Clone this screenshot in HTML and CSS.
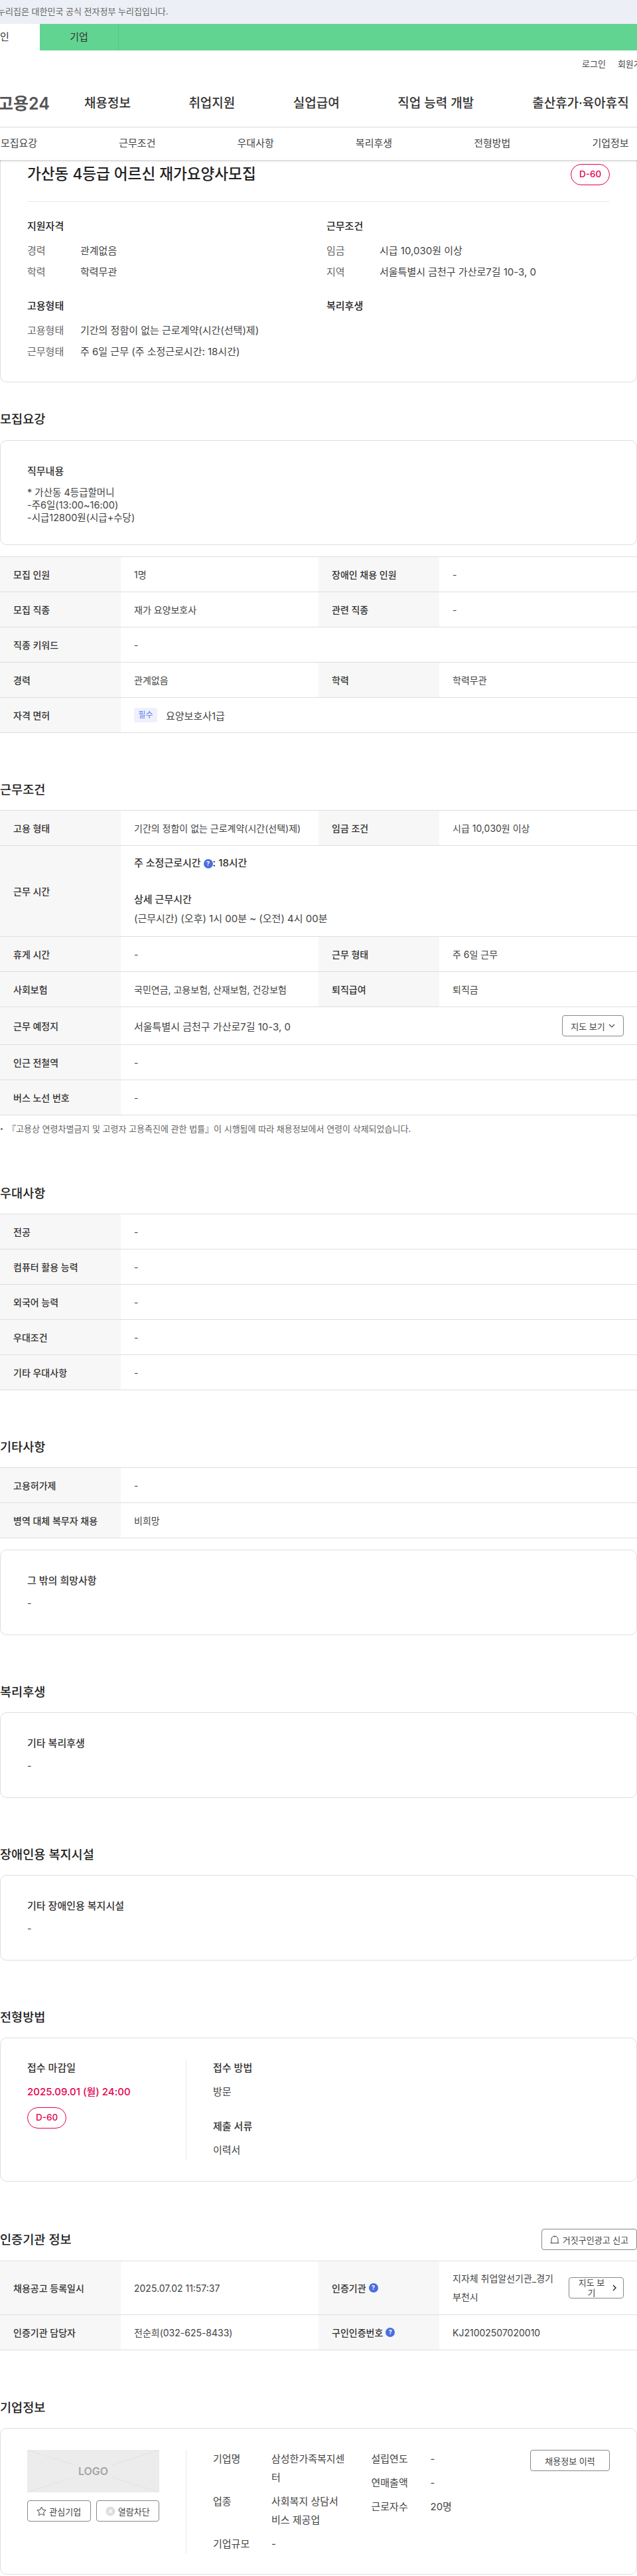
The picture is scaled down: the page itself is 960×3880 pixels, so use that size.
FILE: index.html
```html
<!DOCTYPE html>
<html lang="ko">
<head>
	<meta charset="UTF-8">
	<title>가산동 4등급 어르신 재가요양사모집 | 고용24</title>
	<link rel="stylesheet" href="styles.css">
</head>
<body>

	<!-- top banner -->
	<div class="gov-bar"><span>누리집은 대한민국 공식 전자정부 누리집입니다.</span></div>

	<div class="user-tabs">
		<div class="user-tab active"><span>인</span></div>
		<div class="user-tab">기업</div>
	</div>

	<div class="util-links">
		<a>로그인</a>
		<a>회원가입</a>
	</div>

	<header class="main-nav">
		<div class="logo">고용24</div>
		<a class="nav-1">채용정보</a>
		<a class="nav-2">취업지원</a>
		<a class="nav-3">실업급여</a>
		<a class="nav-4">직업 능력 개발</a>
		<a class="nav-5">출산휴가·육아휴직</a>
	</header>

	<nav class="anchor-tabs">
		<a>모집요강</a>
		<a>근무조건</a>
		<a>우대사항</a>
		<a>복리후생</a>
		<a>전형방법</a>
		<a>기업정보</a>
	</nav>

	<div class="content">

		<!-- summary card -->
		<section class="card summary">
			<div class="summary-head">
				<h1>가산동 4등급 어르신 재가요양사모집</h1>
				<span class="dday">D-60</span>
			</div>
			<div class="summary-grid">
				<div class="sum-block">
					<h3>지원자격</h3>
					<dl><dt>경력</dt><dd>관계없음</dd></dl>
					<dl><dt>학력</dt><dd>학력무관</dd></dl>
				</div>
				<div class="sum-block">
					<h3>근무조건</h3>
					<dl><dt>임금</dt><dd>시급 10,030원 이상</dd></dl>
					<dl><dt>지역</dt><dd>서울특별시 금천구 가산로7길 10-3, 0</dd></dl>
				</div>
				<div class="sum-block">
					<h3>고용형태</h3>
					<dl><dt>고용형태</dt><dd>기간의 정함이 없는 근로계약(시간(선택)제)</dd></dl>
					<dl><dt>근무형태</dt><dd>주 6일 근무 (주 소정근로시간: 18시간)</dd></dl>
				</div>
				<div class="sum-block">
					<h3>복리후생</h3>
				</div>
			</div>
		</section>

		<!-- 모집요강 -->
		<h2 class="sec-title first">모집요강</h2>
		<section class="card text-card job-desc">
			<h3>직무내용</h3>
			<p>* 가산동 4등급할머니<br>-주6일(13:00~16:00)<br>-시급12800원(시급+수당)</p>
		</section>
		<div class="info-table after-card">
			<div class="row"><div class="th">모집 인원</div><div class="td">1명</div><div class="th">장애인 채용 인원</div><div class="td">-</div></div>
			<div class="row"><div class="th">모집 직종</div><div class="td">재가 요양보호사</div><div class="th">관련 직종</div><div class="td">-</div></div>
			<div class="row"><div class="th">직종 키워드</div><div class="td wide">-</div></div>
			<div class="row"><div class="th">경력</div><div class="td">관계없음</div><div class="th">학력</div><div class="td">학력무관</div></div>
			<div class="row"><div class="th">자격 면허</div><div class="td wide"><span class="req">필수</span><span class="big">요양보호사1급</span></div></div>
		</div>

		<!-- 근무조건 -->
		<h2 class="sec-title">근무조건</h2>
		<div class="info-table">
			<div class="row"><div class="th">고용 형태</div><div class="td">기간의 정함이 없는 근로계약(시간(선택)제)</div><div class="th">임금 조건</div><div class="td">시급 10,030원 이상</div></div>
			<div class="row"><div class="th">근무 시간</div>
				<div class="td wide work-time">
					<p class="strong">주 소정근로시간 <span class="help">?</span>: 18시간</p>
					<p class="strong detail">상세 근무시간</p>
					<p>(근무시간) (오후) 1시 00분 ~ (오전) 4시 00분</p>
				</div>
			</div>
			<div class="row"><div class="th">휴게 시간</div><div class="td">-</div><div class="th">근무 형태</div><div class="td">주 6일 근무</div></div>
			<div class="row"><div class="th">사회보험</div><div class="td">국민연금, 고용보험, 산재보험, 건강보험</div><div class="th">퇴직급여</div><div class="td">퇴직금</div></div>
			<div class="row tall"><div class="th">근무 예정지</div>
				<div class="td wide split">
					<span class="big">서울특별시 금천구 가산로7길 10-3, 0</span>
					<button class="btn map-btn">지도 보기
						<svg width="10" height="6" viewBox="0 0 10 6"><path d="M1 1l4 4 4-4" fill="none" stroke="#444" stroke-width="1.1"/></svg>
					</button>
				</div>
			</div>
			<div class="row"><div class="th">인근 전철역</div><div class="td wide">-</div></div>
			<div class="row"><div class="th">버스 노선 번호</div><div class="td wide">-</div></div>
		</div>
		<p class="note">『고용상 연령차별금지 및 고령자 고용촉진에 관한 법률』이 시행됨에 따라 채용정보에서 연령이 삭제되었습니다.</p>

		<!-- 우대사항 -->
		<h2 class="sec-title after-note">우대사항</h2>
		<div class="info-table">
			<div class="row"><div class="th">전공</div><div class="td wide">-</div></div>
			<div class="row"><div class="th">컴퓨터 활용 능력</div><div class="td wide">-</div></div>
			<div class="row"><div class="th">외국어 능력</div><div class="td wide">-</div></div>
			<div class="row"><div class="th">우대조건</div><div class="td wide">-</div></div>
			<div class="row"><div class="th">기타 우대사항</div><div class="td wide">-</div></div>
		</div>

		<!-- 기타사항 -->
		<h2 class="sec-title">기타사항</h2>
		<div class="info-table">
			<div class="row"><div class="th">고용허가제</div><div class="td wide">-</div></div>
			<div class="row"><div class="th">병역 대체 복무자 채용</div><div class="td wide">비희망</div></div>
		</div>
		<section class="card text-card after-table">
			<h3>그 밖의 희망사항</h3>
			<p>-</p>
		</section>

		<!-- 복리후생 -->
		<h2 class="sec-title">복리후생</h2>
		<section class="card text-card">
			<h3>기타 복리후생</h3>
			<p>-</p>
		</section>

		<!-- 장애인용 복지시설 -->
		<h2 class="sec-title">장애인용 복지시설</h2>
		<section class="card text-card">
			<h3>기타 장애인용 복지시설</h3>
			<p>-</p>
		</section>

		<!-- 전형방법 -->
		<h2 class="sec-title">전형방법</h2>
		<section class="card apply">
			<div class="apply-left">
				<h3>접수 마감일</h3>
				<p class="deadline">2025.09.01 (월) 24:00</p>
				<span class="dday">D-60</span>
			</div>
			<div class="apply-right">
				<h3>접수 방법</h3>
				<p>방문</p>
				<h3 class="docs">제출 서류</h3>
				<p>이력서</p>
			</div>
		</section>

		<!-- 인증기관 정보 -->
		<div class="sec-head">
			<h2 class="sec-title">인증기관 정보</h2>
			<button class="btn report-btn">
				<svg width="14" height="14" viewBox="0 0 14 14"><path d="M2 12.5V7a5 5 0 0 1 10 0v5.5M.5 12.5h13M7 2v2" fill="none" stroke="#444" stroke-width="1"/></svg>
				거짓구인광고 신고
			</button>
		</div>
		<div class="info-table">
			<div class="row agency"><div class="th">채용공고 등록일시</div><div class="td">2025.07.02 11:57:37</div><div class="th">인증기관 <span class="help">?</span></div>
				<div class="td split">
					<span class="agency-name">지자체 취업알선기관_경기 부천시</span>
					<button class="btn map-small"><span>지도 보기</span>
						<svg width="6" height="10" viewBox="0 0 6 10"><path d="M1 1l4 4-4 4" fill="none" stroke="#222" stroke-width="1.4"/></svg>
					</button>
				</div>
			</div>
			<div class="row agency-2"><div class="th">인증기관 담당자</div><div class="td">전순희(032-625-8433)</div><div class="th">구인인증번호 <span class="help">?</span></div><div class="td">KJ21002507020010</div></div>
		</div>

		<!-- 기업정보 -->
		<h2 class="sec-title company-title">기업정보</h2>
		<section class="card company">
			<div class="company-left">
				<div class="logo-box">
					<svg width="199" height="64" viewBox="0 0 199 64"><path d="M0 0l199 64M199 0L0 64" stroke="#e2e2e2" stroke-width="1"/></svg>
					<span>LOGO</span>
				</div>
				<div class="company-btns">
					<button class="btn">
						<svg width="15" height="15" viewBox="0 0 15 15"><path d="M7.5 1l2 4.3 4.6.6-3.4 3.2.9 4.7-4.1-2.3-4.1 2.3.9-4.7L.9 5.9l4.6-.6z" fill="none" stroke="#444" stroke-width="1"/></svg>
						관심기업
					</button>
					<button class="btn">
						<svg width="15" height="15" viewBox="0 0 15 15"><circle cx="7.5" cy="7.5" r="7" fill="#ddd"/><path d="M5 5l5 5M10 5l-5 5" stroke="#fff" stroke-width="1.2"/></svg>
						열람차단
					</button>
				</div>
			</div>
			<div class="company-info">
				<dl class="col-a">
					<div><dt>기업명</dt><dd>삼성한가족복지센터</dd></div>
					<div><dt>업종</dt><dd>사회복지 상담서비스 제공업</dd></div>
					<div><dt>기업규모</dt><dd>-</dd></div>
				</dl>
				<dl class="col-b">
					<div><dt>설립연도</dt><dd>-</dd></div>
					<div><dt>연매출액</dt><dd>-</dd></div>
					<div><dt>근로자수</dt><dd>20명</dd></div>
				</dl>
				<button class="btn history-btn">채용정보 이력</button>
			</div>
		</section>

	</div>

</body>
</html>
```

FILE: styles.css
```css
:root{
	--pink: #e6004d;
	--line: #dedede;
	--thbg: #f7f7f7;
	--text: #444;
	--dark: #222;
	--blue: #4a6ee0;
}
*{
	box-sizing: border-box;
}
html, body {
	overflow-x: hidden;
}
body {
	font-family: Inter, "Noto Sans CJK KR", "Noto Sans", sans-serif;
	margin: 0;
	color: var(--text);
	font-size: 15px;
	background-color: white;
}
h1, h2, h3, p, dl, dt, dd {
	margin: 0;
	font-weight: 400;
}

/* top */
.gov-bar {
	height: 36px;
	background-color: #eceff5;
	line-height: 35px;
	font-size: 13px;
	color: #666;
	white-space: nowrap;
	text-indent: -4px;
}
.user-tabs {
	display: flex;
	height: 40px;
	background-color: #62d491;
}
.user-tab {
	width: 119px;
	line-height: 40px;
	text-align: center;
	font-size: 15px;
	border-right: 1px solid #59c886;
	color: #333;
}
.user-tab.active {
	width: 60px;
	background-color: white;
	border-right: none;
	text-align: left;
}
.util-links {
	height: 40px;
	display: flex;
	gap: 18px;
	padding-left: 877px;
	padding-top: 9px;
	font-size: 13px;
	line-height: 22px;
	white-space: nowrap;
}
.main-nav {
	height: 76px;
	border-bottom: 1px solid #e6e6e6;
	font-size: 19px;
	font-weight: 500;
	color: #333;
	display: flex;
	align-items: center;
	white-space: nowrap;
}
.logo {
	font-size: 25px;
	font-weight: 600;
	margin-left: -3px;
	width: 130px;
	color: #555;
}
.nav-1, .nav-2, .nav-3 { width: 157.4px; }
.nav-4 { width: 203px; }

.anchor-tabs {
	display: grid;
	grid-template-columns: repeat(6, 178.3px);
	margin-left: -60.6px;
	width: 1070px;
	height: 49px;
	font-size: 15px;
	line-height: 48px;
	text-align: center;
	background-color: white;
	box-shadow: 0 1px 3px rgba(0,0,0,0.25);
	position: relative;
}

/* cards */
.card {
	border: 1px solid var(--line);
	border-radius: 10px;
}
.summary {
	border-top: none;
	border-top-left-radius: 0;
	border-top-right-radius: 0;
	height: 335px;
	padding: 0 40px;
}
.summary-head {
	display: flex;
	justify-content: space-between;
	height: 63px;
	border-bottom: 1px solid #e8e8e8;
	padding-top: 6px;
}
.summary-head h1 {
	font-size: 22.6px;
	font-weight: 500;
	color: var(--dark);
	line-height: 30px;
}
.dday {
	display: inline-block;
	width: 59px;
	height: 32px;
	border: 1px solid var(--pink);
	border-radius: 16px;
	color: var(--pink);
	font-size: 13.5px;
	font-weight: 500;
	line-height: 29px;
	text-align: center;
}
.summary-grid {
	display: grid;
	grid-template-columns: 451px 1fr;
	padding-top: 25px;
}
.sum-block {
	height: 120px;
}
.sum-block h3 {
	font-size: 15px;
	font-weight: 500;
	color: var(--dark);
	line-height: 24px;
	margin-bottom: 13px;
}
.sum-block dl {
	display: flex;
	line-height: 24px;
	margin-bottom: 8px;
}
.sum-block dt {
	width: 80px;
	color: #666;
}

/* section titles */
.sec-title {
	font-size: 18.6px;
	font-weight: 500;
	color: var(--dark);
	line-height: 30px;
	padding-top: 70px;
	margin-bottom: 16px;
}
.sec-title.first {
	padding-top: 40px;
	margin-bottom: 17px;
}

/* tables */
.info-table {
	border-top: 1px solid var(--line);
}
.info-table.after-card {
	margin-top: 17px;
}
.row {
	display: grid;
	grid-template-columns: 182px 298px 182px 298px;
	min-height: 53px;
	border-bottom: 1px solid var(--line);
}
.th, .td {
	display: flex;
	align-items: center;
	padding: 0 20px;
	font-size: 14px;
}
.th {
	background-color: var(--thbg);
	color: #333;
	font-weight: 500;
	gap: 4px;
}
.td.wide {
	grid-column: span 3;
}
.split {
	justify-content: space-between;
}
.big {
	font-size: 15px;
}
.row.tall {
	height: 57px;
}
.req {
	display: inline-block;
	width: 35px;
	height: 22px;
	line-height: 21px;
	text-align: center;
	font-size: 12px;
	color: #5f7fe8;
	background-color: #eef1fd;
	border-radius: 3px;
	margin-right: 13px;
}
.help {
	display: inline-block;
	width: 14px;
	height: 14px;
	line-height: 14px;
	border-radius: 50%;
	background-color: var(--blue);
	color: white;
	font-size: 9px;
	font-weight: 700;
	text-align: center;
	vertical-align: 1px;
}
.work-time {
	display: block;
	padding-top: 12px;
	height: 136px;
	line-height: 28px;
	font-size: 15px;
}
.work-time .strong {
	color: #333;
	font-weight: 500;
}
.work-time .detail {
	margin-top: 27px;
}
.work-time .detail + p {
	margin-top: 1px;
}

/* buttons */
.btn {
	font: inherit;
	font-size: 13px;
	color: var(--text);
	background-color: white;
	border: 1px solid #888;
	border-radius: 4px;
	height: 32px;
	display: inline-flex;
	align-items: center;
	justify-content: center;
	gap: 5px;
	padding: 0;
	white-space: nowrap;
}
.map-btn {
	width: 93px;
	flex: none;
}
.note {
	font-size: 13px;
	color: #666;
	margin-top: 10px;
	line-height: 20px;
	padding-left: 11px;
	position: relative;
}
.note::before {
	content: "";
	position: absolute;
	left: 1px;
	top: 9px;
	width: 3px;
	height: 3px;
	border-radius: 50%;
	background-color: #666;
}
.sec-title.after-note {
	padding-top: 72px;
}

/* text cards */
.text-card {
	padding: 34px 40px 38px;
}
.text-card h3 {
	font-size: 15px;
	font-weight: 500;
	color: #333;
	line-height: 24px;
	margin-bottom: 12px;
}
.text-card p {
	line-height: 19px;
	font-size: 14.5px;
}
.job-desc {
	height: 158px;
}
.text-card.job-desc h3 {
	margin-bottom: 10px;
}
.text-card.after-table {
	margin-top: 17px;
}

/* apply */
.apply {
	display: flex;
	padding: 32px 40px;
	height: 217px;
}
.apply-left {
	width: 240px;
	border-right: 1px solid #e8e8e8;
}
.apply h3 {
	font-size: 15px;
	font-weight: 500;
	color: #333;
	line-height: 26px;
	margin-bottom: 10px;
}
.apply p {
	line-height: 26px;
	font-size: 15px;
}
.apply .deadline {
	color: var(--pink);
	font-weight: 500;
	margin-bottom: 10px;
}
.apply-right {
	padding-left: 40px;
}
.apply h3.docs {
	margin-top: 26px;
}

/* agency */
.sec-head {
	display: flex;
	justify-content: space-between;
	align-items: flex-end;
	margin-bottom: 17px;
}
.sec-head .sec-title {
	margin-bottom: 0;
	padding-top: 72px;
}
.report-btn {
	width: 144px;
	margin-bottom: -1px;
}
.row.agency {
	height: 81px;
}
.agency-name {
	line-height: 28px;
	width: 168px;
	flex: none;
}
.map-small {
	width: 83px;
	flex: none;
	gap: 8px;
}
.map-small span {
	width: 46px;
	white-space: normal;
	line-height: 15px;
	text-align: center;
}
.row.agency-2 {
	height: 53px;
}

/* company */
.company-title {
	padding-top: 71px;
}
.company {
	display: flex;
	padding: 32px 40px;
	height: 221px;
}
.company-left {
	width: 240px;
	height: 156px;
	border-right: 1px solid #e8e8e8;
	padding-right: 40px;
	flex: none;
}
.logo-box {
	position: relative;
	width: 199px;
	height: 64px;
	background-color: #ececec;
	display: flex;
	align-items: center;
	justify-content: center;
}
.logo-box svg {
	position: absolute;
	left: 0;
	top: 0;
}
.logo-box span {
	position: relative;
	background-color: #ececec;
	padding: 0 6px;
	color: #a5a5a5;
	font-size: 16px;
	font-weight: 600;
}
.company-btns {
	display: flex;
	gap: 8px;
	margin-top: 12px;
}
.company-btns .btn {
	flex: 1;
	gap: 4px;
}
.company-info {
	display: flex;
	padding-left: 40px;
	width: 638px;
}
.company-info dl > div {
	display: flex;
}
.company-info dt {
	flex: none;
}
.col-a {
	width: 238.5px;
}
.col-a > div {
	line-height: 28px;
	margin-bottom: 8px;
}
.col-a dt {
	width: 88px;
}
.col-a dd {
	width: 112px;
	word-break: break-all;
}
.col-b > div {
	line-height: 28px;
	margin-bottom: 8px;
}
.col-b dt {
	width: 89px;
}
.history-btn {
	width: 120px;
	margin-left: auto;
	flex: none;
}
```
